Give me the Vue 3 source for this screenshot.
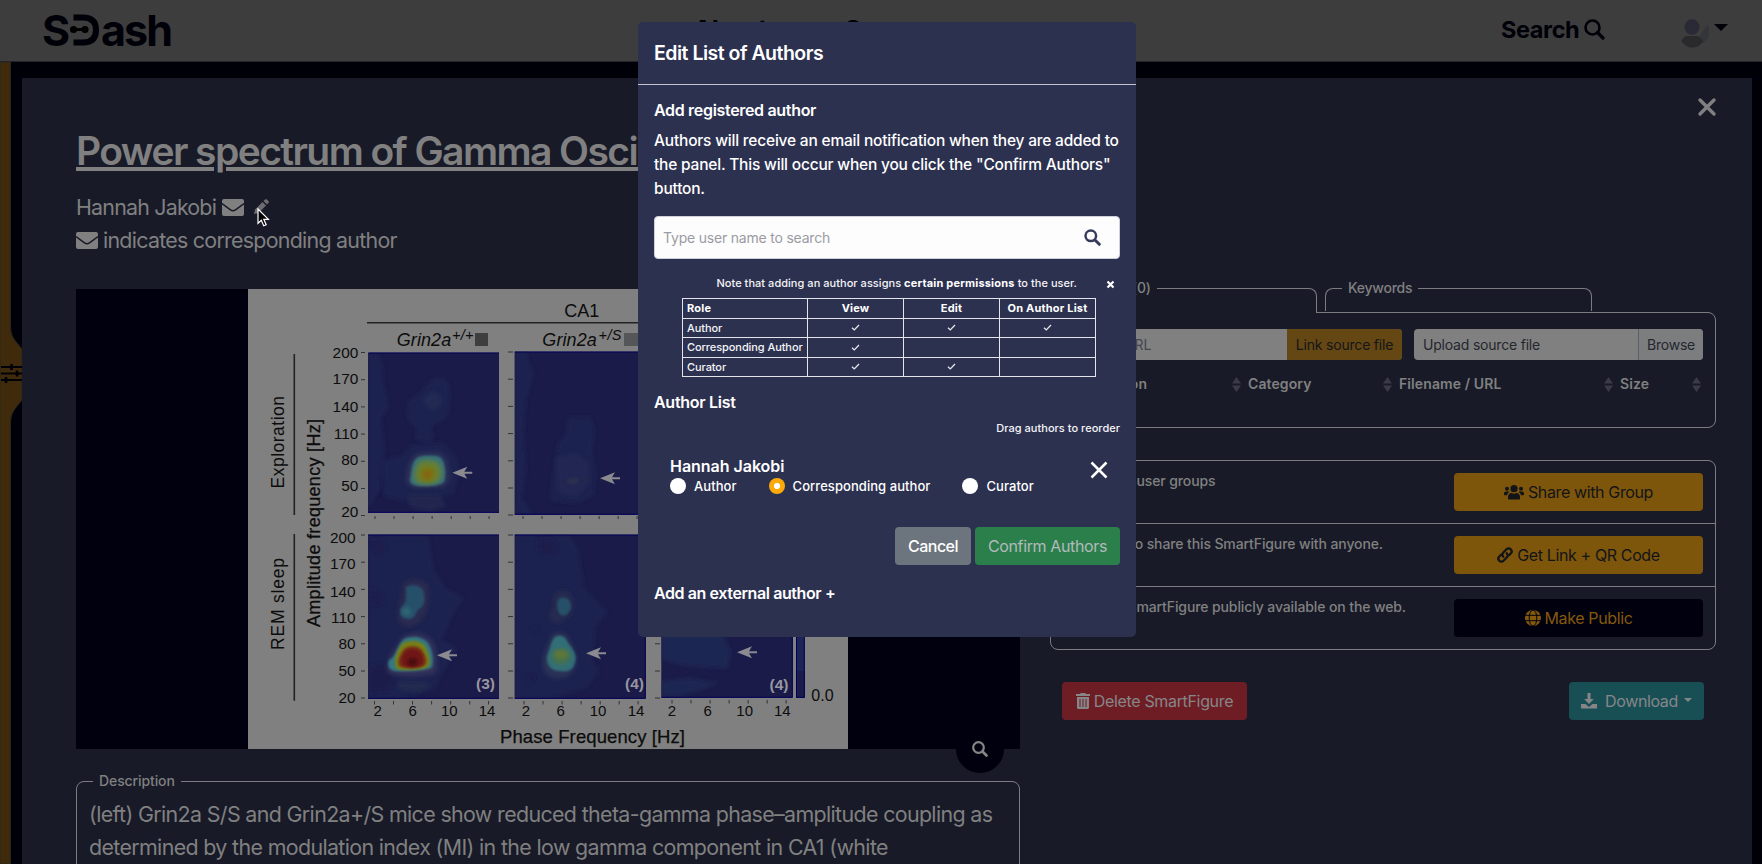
<script setup>
const columns = ['Description', 'Category', 'Filename / URL', 'Size']

const shareRows = [
  { text: 'Share with user groups', label: 'Share with Group', icon: 'users', kind: 'amber', fit: 'fit-a' },
  { text: 'Get a link to share this SmartFigure with anyone.', label: 'Get Link + QR Code', icon: 'link', kind: 'amber', fit: 'fit-b' },
  { text: 'Make the SmartFigure publicly available on the web.', label: 'Make Public', icon: 'globe', kind: 'dark', fit: 'fit-c' },
]

const permissions = [
  { role: 'Author', marks: [true, true, true] },
  { role: 'Corresponding Author', marks: [true, false, false] },
  { role: 'Curator', marks: [true, true, false] },
]

const roles = [
  { label: 'Author', on: false },
  { label: 'Corresponding author', on: true },
  { label: 'Curator', on: false },
]

const amplitudes = [200, 170, 140, 110, 80, 50, 20]
const topBase = [69.2, 95.2, 123.2, 149.8, 175.8, 202.2, 228.2]
const lowBase = [253.5, 279.5, 307.5, 333.5, 359.8, 387.2, 413.5]
const tickStep = [0, 27.2, 54.4, 81.6, 108.8, 136, 163]
const phases = [
  [129.7, 164.7, 201.3, 239],
  [278, 312.7, 350, 388],
  [424, 459.7, 496.7, 534.3],
]
const phaseNames = [2, 6, 10, 14]
const arrows = [[204.3, 183.7], [352, 189.3], [189, 366.3], [338, 364.3], [489, 363.3]]
</script>

<template>
  <div class="app">
    <header class="topbar">
      <div class="logo">
        <span class="logo-s">S</span>
        <svg class="logo-d" width="30" height="32" viewBox="0 0 30 32">
          <path d="M3.5 3.5H13C22 3.5 26 8 26 16S22 28.500 13 28.500H3.500" fill="none" stroke="#000008" stroke-width="6" />
          <circle cx="3.500" cy="15.500" r="3.600" /><circle cx="15" cy="15.500" r="3.600" /><path d="M3 14h12v3H3z" />
        </svg>
        <span class="logo-ash">ash</span>
      </div>
      <nav class="nav"><span>About</span><span>Groups</span></nav>
      <div class="search">
        Search
        <svg width="21" height="21" viewBox="0 0 21 21"><circle cx="8.500" cy="8.500" r="7" fill="none" stroke="currentColor" stroke-width="2.600" /><path d="M13.500 13.500l5.500 5.500" stroke="currentColor" stroke-width="3.200" stroke-linecap="round" /></svg>
      </div>
      <div class="avatar">
        <svg width="28" height="29" viewBox="0 0 28 29"><path d="M26.500 5.500a14 14 0 0 1-4.500 19l-3-8z" fill="#34343b" /><ellipse cx="11" cy="8" rx="7.500" ry="7.800" fill="#2a2a36" /><path d="M.5 22c1.500-4 4-5 6-5h9c3 0 5 2 6.500 5.500-3 4.500-7 6-11 6S3 26 .5 22z" fill="#2a2a2c" /></svg>
        <i class="caret"></i>
      </div>
    </header>

    <main class="stage">
      <svg class="rail" width="22" height="802" viewBox="0 0 22 802">
        <path d="M0 0H10.500V263C10.500 276 15 278 22 287V338C15 347 10.500 350 10.500 362V802H0z" fill="#3f2a0b" stroke="#26261f" />
        <path d="M1 305h21M1 311.500h21M1 318h21" stroke="#000008" stroke-width="2" />
        <path d="M11.500 302v6M17 308.500v6M6 315v6" stroke="#000008" stroke-width="2.600" />
      </svg>

      <section class="panel">
        <svg class="close" width="20" height="20" viewBox="0 0 20 20"><path d="M3 3l14 14M17 3L3 17" stroke="#808080" stroke-width="3.400" stroke-linecap="round" /></svg>

        <div class="left">
          <h1>Power spectrum of Gamma Oscillations</h1>
          <div class="byline">
            <span>Hannah Jakobi</span>
            <svg class="mail" width="22" height="17" viewBox="0 0 22 17"><rect width="22" height="17" rx="2" fill="#808080" /><path d="M0 4.500l8.500 6.300c1.600 1.200 3.400 1.200 5 0L22 4.500" fill="none" stroke="#181a28" stroke-width="1.500" /></svg>
            <svg class="pencil" width="15" height="15" viewBox="0 0 15 15"><path d="M0 15l1-4.500 7.500-7.500 3.500 3.500L4.500 14zM9.500 2L11 .6c.6-.6 1.300-.6 1.900 0l1.500 1.500c.6.6.6 1.300 0 1.900L13 5.500z" fill="#6d6d70" /></svg>
          </div>
          <div class="byline second">
            <svg class="mail" width="22" height="17" viewBox="0 0 22 17"><rect width="22" height="17" rx="2" fill="#808080" /><path d="M0 4.500l8.500 6.300c1.600 1.200 3.400 1.200 5 0L22 4.500" fill="none" stroke="#181a28" stroke-width="1.500" /></svg>
            <span class="indicates">indicates corresponding author</span>
          </div>

          <div class="figure">
            <svg width="600" height="460" viewBox="0 0 600 460" class="plot">
              <defs>
                <filter id="soft" x="-30%" y="-30%" width="160%" height="160%"><feGaussianBlur stdDeviation="2" /></filter>
                <filter id="edge" x="-30%" y="-30%" width="160%" height="160%"><feGaussianBlur stdDeviation=".9" /></filter>
                <clipPath id="a"><rect x="120" y="63.700" width="131" height="160" /></clipPath>
                <clipPath id="b"><rect x="266.700" y="62.700" width="131" height="163" /></clipPath>
                <clipPath id="c"><rect x="120" y="245.700" width="131" height="164" /></clipPath>
                <clipPath id="d"><rect x="266.700" y="245.700" width="131" height="164" /></clipPath>
                <clipPath id="e"><rect x="413.300" y="245.700" width="131.400" height="163" /></clipPath>
              </defs>
              <rect width="600" height="460" fill="#808080" />
              <path d="M119 33.700H400" stroke="#222" stroke-width="1.600" />
              <path d="M46.300 65V226M46.300 245V411.700" stroke="#222" stroke-width="1.600" />

              <g clip-path="url(#a)">
                <rect x="120" y="63" width="132" height="162" fill="#1b1b49" />
                <path d="M120 64h10l4 10 2 20 5 24-8 12 4 30-4 40-13 20z" fill="#1b2050" filter="url(#soft)" />
                <path d="M134 172l20-6 10-10 30-3 14 14 4 14-6 24-40 10-30-8z" fill="#1c2250" filter="url(#soft)" />
                <path d="M192 88c12 0 11 20 9 34-2 12-14 10-18 18l4 8-6 6-14-3 2-12c-12-3-12-24-6-30 10-2 16-20 29-21z" fill="#1c234f" filter="url(#soft)" />
                <ellipse cx="185" cy="112" rx="9" ry="9" fill="#212953" filter="url(#soft)" />
                <path d="M160 205h32l6 12-16 5-20-4z" fill="#20264f" filter="url(#soft)" />
                <path d="M168 164l24-1 7 7 3 20-6 8-30 1-8-6 2-17z" fill="#2f3158" filter="url(#soft)" />
                <path d="M171 168c8-2 18-2 22 1 5 5 5 20 3 24-4 4-14 4-24 4-11-1-11-5-9-11 1-9 2-16 8-18z" fill="#34707a" filter="url(#edge)" />
                <path d="M172 172c8-2 17-1 20 4 3 7 2 13-2 17-7 3-15 2-21 1-6-5-1-19 3-22z" fill="#657f37" filter="url(#soft)" />
                <ellipse cx="179.500" cy="185" rx="7.500" ry="7.500" fill="#7c730f" filter="url(#soft)" />
                <ellipse cx="179.500" cy="185.500" rx="3.500" ry="4" fill="#856517" filter="url(#edge)" />
              </g>
              <g clip-path="url(#b)">
                <rect x="266" y="62" width="132" height="165" fill="#1b1b49" />
                <path d="M266 62h12l8 24-8 24-2 30 2 40-4 30 12 16h-20z" fill="#1b2150" filter="url(#soft)" />
                <path d="M320 128h22l5 12-3 22 4 20-2 24-16 8-28-2 4-36 4-22 8-10z" fill="#1d244f" filter="url(#soft)" />
                <path d="M308 168l20-4 12 10 2 20-14 14-18-4z" fill="#202852" filter="url(#soft)" />
                <ellipse cx="325" cy="192" rx="7" ry="3.500" fill="#2b2e4f" filter="url(#edge)" />
              </g>
              <g clip-path="url(#c)">
                <rect x="120" y="245" width="132" height="165" fill="#1b1b49" />
                <path d="M120 245h60l6 36 12 18 18 10-12 18-10 24 16 8-14 22-10 20-40 9h-26z" fill="#1c2450" filter="url(#soft)" />
                <path d="M120 378l20-4 10 14-10 14-20 2zM122 252l12-2 4 10-8 6zM122 300l8 2 6 10-10 6z" fill="#1b1e4c" filter="url(#soft)" />
                <path d="M154 296c6-7 20-7 26 0 2 10 2 24-6 34-6 8-14 10-22 4-6-8 4-26 2-38z" fill="#292b50" filter="url(#soft)" />
                <path d="M158 298c6-3 14-2 17 3 2 7 2 14-2 18-5 2-5 8-8 10-5 3-13 0-13-6 0-5 6-8 6-13z" fill="#26506a" filter="url(#edge)" />
                <ellipse cx="158.500" cy="322.500" rx="4" ry="4" fill="#326a74" filter="url(#soft)" />
                <path d="M154 348c9-6 24-5 30 4 6 10 6 22 4 32-14 5-36 5-48 0-4-14 8-24 14-36z" fill="#30335a" filter="url(#soft)" />
                <path d="M156 350c7-3 18-3 24 4 5 8 6 18 4 24-2 4-32 5-37 4-6-1-8-5-6-11 7-2 8-15 15-21z" fill="#347783" filter="url(#edge)" />
                <path d="M155 354c6-3 18-3 22 3 4 7 6 15 4 20-3 4-26 5-32 3-5-6 0-20 6-26z" fill="#768013" filter="url(#edge)" />
                <path d="M157 359c6-3 13-3 17 2 4 6 6 12 3 15-4 4-22 4-26 1-3-5 2-14 6-18z" fill="#7c3513" filter="url(#edge)" />
                <path d="M159 361c6-2 11-1 14 3 3 6 3 11 0 13-5 2-16 2-19-1-2-5 1-12 5-15z" fill="#701417" filter="url(#edge)" />
                <ellipse cx="164.500" cy="373" rx="5" ry="4" fill="#4c0a0e" filter="url(#edge)" />
                <path d="M148 392h28l8 5-14 6-20-3z" fill="#242b50" filter="url(#soft)" />
              </g>
              <g clip-path="url(#d)">
                <rect x="266" y="245" width="132" height="165" fill="#1b1b49" />
                <path d="M266 245h54l10 14 6 40 12 12 12 12-12 14-4 34 8 10-14 18-40 11h-32z" fill="#1c2450" filter="url(#soft)" />
                <path d="M290 250h14l6 10-10 8-10-6zM284 336l8 4-6 6zM278 384l10 4-6 8z" fill="#1b1e4c" filter="url(#soft)" />
                <path d="M312 302c9-3 14 6 13 16-2 10-10 17-20 15-6-3-1-12 0-18 0-6 2-11 7-13z" fill="#272c50" filter="url(#soft)" />
                <path d="M312 309c6-2 11 2 11 9-1 6-6 10-10 8-5-3-5-15-1-17z" fill="#265068" filter="url(#edge)" />
                <path d="M304 346c8-5 16-2 19 8 6 10 8 22 0 31-8 6-20 6-26-1-6-14 2-26 7-38z" fill="#2a3156" filter="url(#soft)" />
                <path d="M307 348c5-3 11-1 13 6 6 7 10 14 6 22-2 6-8 7-14 6-9 0-14-6-13-15 3-6 4-16 8-19z" fill="#326e77" filter="url(#edge)" />
                <ellipse cx="313" cy="367.500" rx="9" ry="8" fill="#46714c" filter="url(#soft)" />
                <ellipse cx="313" cy="365.500" rx="7" ry="4" fill="#607838" filter="url(#soft)" />
              </g>
              <g clip-path="url(#e)">
                <rect x="413" y="245" width="132" height="165" fill="#1b1b49" />
                <path d="M413 345h62l8 18-3 16-26-1-20-2-21-6zM413 392l30-3 28 5-20 8-22 5h-16z" fill="#1c2652" filter="url(#soft)" />
              </g>
              <rect x="548" y="245" width="8.700" height="164" fill="#1c2553" />
              <path d="M548 382h8.700v26.500H548z" fill="#1b1c4b" />
              <g fill="none" stroke="#00005a" stroke-width="1">
                <path d="M120.500 64H251M120 223.300H251M266.700 63H398M266.700 225.300H398M120 246H251M120 409.300H251M266.700 246H398M397.300 246V409.300H266.700M544.300 246V408.300H413.300M548.500 246V408.300H556.300V246" />
              </g>

              <g stroke="#333" stroke-width="1">
                <template v-for="s in tickStep" :key="s">
                  <path :d="`M113 ${63.5 + s}h4M260 ${63 + s}h5M113 ${246 + s}h4M260 ${246 + s}h5M407 ${246 + s}h5`" />
                  <path :d="`M${127 + s * 0.7} 227v3M${275 + s * 0.7} 227v3M${126.500 + s * 0.7} 412v3.500M${276 + s * 0.7} 412v3.500M${424 + s * 0.7} 411v3.500`" />
                </template>
              </g>

              <g font-size="15.400" text-anchor="end">
                <text v-for="(n, i) in amplitudes" :key="'t' + n" x="110.300" :y="topBase[i]">{{ n }}</text>
                <text v-for="(n, i) in amplitudes" :key="'l' + n" x="107.600" :y="lowBase[i]">{{ n }}</text>
              </g>
              <g font-size="15" text-anchor="middle">
                <template v-for="(set, k) in phases" :key="k">
                  <text v-for="(x, i) in set" :key="x" :x="x" y="427">{{ phaseNames[i] }}</text>
                </template>
              </g>
              <text x="563.300" y="412" font-size="16">0.0</text>
              <text x="316.300" y="27.700" font-size="18" textLength="35">CA1</text>
              <g font-style="italic">
                <text x="148.700" y="57" font-size="18" textLength="54.500">Grin2a</text>
                <text x="204" y="51" font-size="14.500" textLength="21.500">+/+</text>
                <text x="294.300" y="57" font-size="18" textLength="54.500">Grin2a</text>
                <text x="350.500" y="51" font-size="14.500" textLength="23">+/S</text>
              </g>
              <rect x="227" y="44" width="13" height="13" fill="#3e3e3e" />
              <rect x="376" y="44" width="16" height="13" fill="#555657" />
              <text transform="translate(36.300 199.500) rotate(-90)" font-size="17.500" textLength="92.500">Exploration</text>
              <text transform="translate(36.300 361) rotate(-90)" font-size="17.500" textLength="92">REM sleep</text>
              <text transform="translate(71.500 338) rotate(-90)" font-size="18" textLength="208" class="axis">Amplitude frequency [Hz]</text>
              <text x="252" y="453.500" font-size="18.500" textLength="185" class="axis">Phase Frequency [Hz]</text>
              <g font-size="15.500" font-weight="700" class="count">
                <text x="228" y="400">(3)</text><text x="377" y="400">(4)</text><text x="521.500" y="401">(4)</text>
              </g>
              <path v-for="a in arrows" :key="a[0]" :d="`M${a[0]} ${a[1]}l15 -6 -3 5h8v2h-8l3 5z`" fill="#8a8a90" />
            </svg>
            <div class="lens">
              <svg width="16" height="16" viewBox="0 0 16 16"><circle cx="6.500" cy="6.500" r="5.300" fill="none" stroke="#868686" stroke-width="2.200" /><path d="M10.500 10.500l4 4" stroke="#868686" stroke-width="2.700" stroke-linecap="round" /></svg>
            </div>
          </div>

          <fieldset class="description">
            <legend>Description</legend>
            <p>(left) Grin2a S/S and Grin2a+/S mice show reduced theta-gamma phase–amplitude coupling as determined by the modulation index (MI) in the low gamma component in CA1 (white</p>
          </fieldset>
        </div>

        <aside class="right">
          <div class="tabs">
            <fieldset class="tab active"><legend>Sources (0)</legend></fieldset>
            <fieldset class="tab"><legend>Keywords</legend></fieldset>
          </div>
          <div class="sources">
            <div class="inputs">
              <div class="field"><span class="box url">Source URL</span><span class="linkbtn">Link source file</span></div>
              <div class="field upload"><span class="box">Upload source file</span><span class="browse">Browse</span></div>
            </div>
            <div class="cols">
              <div v-for="c in columns" :key="c" class="col">
                <span>{{ c }}</span>
                <svg width="9" height="15" viewBox="0 0 9 15"><path d="M0 6.500L4.500 0 9 6.500zM0 8.500h9L4.500 15z" fill="#3a3b44" /></svg>
              </div>
            </div>
          </div>

          <div class="sharing">
            <div v-for="r in shareRows" :key="r.label" class="share-row">
              <span :class="r.fit">{{ r.text }}</span>
              <button :class="['btn', r.kind]">
                <svg v-if="r.icon === 'users'" width="20" height="15" viewBox="0 0 20 15"><g fill="currentColor"><circle cx="10" cy="3.700" r="3.600" /><circle cx="3" cy="3.800" r="2" /><circle cx="17" cy="3.800" r="2" /><path d="M4 13.500v-1.400c0-2.500 1.700-4 3.700-4 1.300.8 3.300.8 4.600 0 2 0 3.700 1.500 3.700 4v1.400c0 .7-.5 1.100-1.200 1.100H5.200C4.500 14.600 4 14.200 4 13.500zM0 9.500V8.600c0-1.200.8-2 2-2h2c.6 0 1 .1 1.400.5C4 8 3.300 9 3 10.200H.8c-.5 0-.8-.3-.8-.7zM20 9.500V8.600c0-1.200-.8-2-2-2h-2c-.6 0-1 .1-1.400.5C16 8 16.700 9 17 10.200h2.200c.5 0 .8-.3.8-.7z" /></g></svg>
                <svg v-else-if="r.icon === 'link'" width="16" height="16" viewBox="0 0 16 16"><g fill="none" stroke="currentColor" stroke-width="2.300" stroke-linecap="round"><path d="M6.300 9.700c-1.200-1.200-1.200-3 0-4.200l3.200-3.200c1.200-1.200 3-1.200 4.200 0s1.200 3 0 4.200L12 8.200" /><path d="M9.700 6.300c1.200 1.200 1.200 3 0 4.200l-3.200 3.200c-1.200 1.200-3 1.200-4.200 0s-1.200-3 0-4.200L4 7.800" /></g></svg>
                <svg v-else width="16" height="16" viewBox="0 0 16 16"><circle cx="8" cy="8" r="8" fill="currentColor" /><g fill="none" stroke="#00000f" stroke-width="1"><ellipse cx="8" cy="8" rx="3.800" ry="8" /><path d="M0 5.300h16M0 10.700h16" /></g></svg>
                {{ r.label }}
              </button>
            </div>
          </div>

          <div class="actions">
            <button class="btn danger">
              <svg width="14" height="16" viewBox="0 0 14 16"><path d="M0 1h4l.8-1h4.400l.8 1h4v2H0zM1 4h12v10.500c0 .9-.6 1.500-1.500 1.500h-9C1.600 16 1 15.400 1 14.500z" fill="currentColor" /><path d="M4 6v8M7 6v8M10 6v8" stroke="#6f1d25" stroke-width="1" /></svg>
              Delete SmartFigure
            </button>
            <button class="btn info">
              <svg width="16" height="16" viewBox="0 0 16 16"><path d="M6.500 0h3v6h3.300L8 11 3.200 6h3.300zM0 11h4.500L8 14l3.500-3H16v4.500H0z" fill="currentColor" /></svg>
              <span>Download</span><i class="caret"></i>
            </button>
          </div>
        </aside>
      </section>
    </main>

    <svg class="cursor" width="13" height="19" viewBox="0 0 13 19"><path d="M1 1v14.300l3.300-3.100 2.400 5.600 2.500-1.100-2.400-5.400h4.600z" fill="#000" stroke="#fff" stroke-width="1.200" /></svg>

    <div class="modal">
      <div class="modal-head">Edit List of Authors</div>
      <div class="modal-body">
        <h2>Add registered author</h2>
        <p class="intro">Authors will receive an email notification when they are added to<br>the panel. This will occur when you click the "Confirm Authors"<br>button.</p>
        <div class="user-search">
          <span>Type user name to search</span>
          <svg width="17" height="17" viewBox="0 0 17 17"><circle cx="6.800" cy="6.800" r="5.300" fill="none" stroke="#383c5c" stroke-width="2.500" /><path d="M11 11l4.300 4.300" stroke="#383c5c" stroke-width="3" stroke-linecap="round" /></svg>
        </div>
        <div class="note">
          <span>Note that adding an author assigns <b>certain permissions</b> to the user.</span>
          <svg width="9" height="9" viewBox="0 0 9 9"><path d="M1.500 1.500l6 6M7.500 1.500l-6 6" stroke="#fff" stroke-width="2.200" /></svg>
        </div>
        <table>
          <thead><tr><th>Role</th><th>View</th><th>Edit</th><th>On Author List</th></tr></thead>
          <tbody>
            <tr v-for="p in permissions" :key="p.role">
              <td>{{ p.role }}</td>
              <td v-for="(m, i) in p.marks" :key="i">
                <svg v-if="m" width="9" height="7" viewBox="0 0 9 7"><path d="M1 3.700l2.300 2.200L8 1" fill="none" stroke="#e8e8ee" stroke-width="1.300" /></svg>
              </td>
            </tr>
          </tbody>
        </table>
        <h2 class="list-title">Author List</h2>
        <div class="hint">Drag authors to reorder</div>
        <div class="person">
          <div class="name">Hannah Jakobi</div>
          <div class="roles">
            <label v-for="r in roles" :key="r.label"><i :class="{ on: r.on }"></i>{{ r.label }}</label>
          </div>
          <svg class="remove" width="18" height="18" viewBox="0 0 18 18"><path d="M1.500 1.500l15 15M16.500 1.500l-15 15" stroke="#fff" stroke-width="2.500" /></svg>
        </div>
        <div class="buttons">
          <button class="btn cancel">Cancel</button>
          <button class="btn confirm">Confirm Authors</button>
        </div>
        <h2 class="external">Add an external author +</h2>
      </div>
    </div>
  </div>
</template>

<style>
body { background: #000008; overflow: hidden; }
</style>

<style scoped>
* { box-sizing: border-box; }
.app { position: relative; width: 1762px; height: 864px; overflow: hidden; display: flex; flex-direction: column; font-family: Inter, "Liberation Sans", sans-serif; color: #808080; white-space: nowrap; }
svg { display: block; flex: none; }
h1, h2, p, fieldset { margin: 0; }
button { font-family: inherit; margin: 0; }

.topbar { position: relative; height: 62px; flex: none; background: #3d3d3d; border-bottom: 1px solid #24242a; display: flex; align-items: center; color: #000008; font-weight: 700; padding-left: 42px; }
.logo { display: flex; align-items: center; font-size: 43px; line-height: 60px; height: 60px; width: 140px; margin-top: -2px; }
.logo-s { width: 28px; }
.logo-d { margin: 0; }
.logo-ash { letter-spacing: -1.900px; margin-left: 1px; }
.nav { display: flex; margin-left: 511px; font-size: 26px; letter-spacing: -.7px; width: 808px; padding-bottom: 3px; }
.nav span { width: 150px; }
.search { display: flex; align-items: center; gap: 5px; font-size: 23.500px; letter-spacing: -.4px; padding-bottom: 2px; }
.avatar { display: flex; margin-left: 76px; gap: 5px; padding-top: 6px; }
.caret { display: block; width: 0; height: 0; border: 7px solid transparent; border-top-color: currentColor; border-bottom: 0; margin-top: 5px; }

.stage { display: flex; flex: none; height: 802px; }
.panel { position: relative; width: 1730px; margin-top: 16px; padding-left: 54px; background: #181a28; display: flex; }
.close { position: absolute; left: 1675px; top: 19px; }

.left { width: 944px; padding-top: 49px; }
h1 { font-size: 39px; font-weight: 600; line-height: 48px; letter-spacing: -1.580px; text-decoration: underline; text-decoration-thickness: 4px; text-underline-offset: 2px; }
.byline { display: flex; align-items: center; margin-top: 16px; height: 33px; font-size: 21.400px; line-height: 33px; letter-spacing: -.8px; }
.byline.second { margin-top: 0; }
.byline .mail { margin: 0 6px 1px 6px; }
.byline.second .mail { margin-left: 0; margin-right: 5px; }
.indicates { letter-spacing: -.73px; }
.pencil { margin: -3px 0 0 4px; }
.figure { position: relative; margin-top: 32px; height: 460px; background: #00000f; padding-left: 172px; }
.plot text { font-family: "Liberation Sans", Arial, sans-serif; fill: #0c0c0c; }
.plot .axis { stroke: #0c0c0c; stroke-width: .25px; }
.plot .count text { fill: #96969f; }
.lens { position: absolute; left: 880px; top: 436px; width: 48px; height: 48px; border-radius: 50%; background: #00000f; display: flex; align-items: center; justify-content: center; }
.description { margin-top: 22px; border: 1px solid #7c7c80; border-radius: 8px; padding: 7px 12px; min-width: 0; height: 200px; }
legend { font-size: 14px; font-weight: 500; line-height: 20px; padding: 0 6px; margin-left: 4px; letter-spacing: -.1px; }
.description p { white-space: normal; font-size: 21.400px; line-height: 33px; letter-spacing: -.640px; width: 912px; }

.right { margin-left: 30px; width: 666px; padding-top: 201px; font-size: 14px; }
.tabs { display: flex; gap: 8px; height: 33px; }
.tab { width: 267px; height: 33px; padding: 0; border: 1px solid #7c7c80; border-bottom: 0; border-radius: 8px 8px 0 0; min-width: 0; margin-top: -1px; }
.tab legend { margin-left: 16px; letter-spacing: -.25px; }
.tab.active legend { margin-left: 17px; letter-spacing: -.1px; }
.tab.active { position: relative; z-index: 1; height: 35px; background: linear-gradient(#181a28, #181a28) bottom / 100% 24px no-repeat; }
.sources { height: 116px; border: 1px solid #7c7c80; border-radius: 0 8px 8px 8px; padding: 16px 12px; }
.inputs { display: flex; gap: 12px; }
.field { display: flex; width: 339px; height: 31px; line-height: 31px; border-radius: 4px; overflow: hidden; color: #24272e; letter-spacing: -.2px; background: #808080; }
.field.upload { width: 289px; }
.box { flex: 1; padding-left: 9px; }
.box.url { padding-left: 12px; color: #45464e; }
.linkbtn { width: 115px; background: #644713; text-align: center; color: #15151a; }
.browse { width: 65px; text-align: center; border-left: 1px solid #5e5f63; background: #7c7d7f; }
.cols { display: grid; grid-template-columns: 181px 151px 221px 82.500px; margin: 14px 0 0 4px; }
.col { display: flex; justify-content: space-between; align-items: center; padding-right: 7px; font-weight: 600; line-height: 20px; letter-spacing: .1px; }
.col:first-child { letter-spacing: .2px; }
.col:last-child { padding-right: 2px; }

.sharing { margin-top: 32px; border: 1px solid #7c7c80; border-radius: 8px; height: 190px; }
.share-row { display: flex; justify-content: space-between; align-items: flex-start; height: 63px; padding: 12px 12px 0; font-weight: 500; line-height: 20px; border-top: 1px solid #7c7c80; }
.share-row:first-child { border-top: 0; height: 62px; }
.share-row > span { margin-top: -2px; text-align: right; letter-spacing: -.11px; }
.fit-a { width: 152.500px; }
.fit-b { width: 320px; }
.fit-c { width: 343px; }
.btn { display: flex; align-items: center; justify-content: center; gap: 4px; height: 38px; border: 0; border-radius: 4px; font-size: 16px; letter-spacing: -.370px; padding: 0; }
.amber { width: 249px; background: #7d560b; color: #131418; }
.dark { width: 249px; background: #00000f; color: #84590c; }
.actions { display: flex; justify-content: space-between; margin-top: 32px; padding: 0 12px; }
.danger { width: 185px; background: #6f1d25; color: #868689; letter-spacing: -.340px; }
.info { width: 135px; background: #184f55; color: #868689; }
.info span { margin-left: 4px; }
.info .caret { border-width: 4.500px; border-bottom: 0; margin: -3px 0 0 2px; }

.cursor { position: absolute; left: 257px; top: 208px; }

.modal { position: absolute; z-index: 5; left: 638px; top: 22px; width: 498px; height: 615px; background: #2d3150; border-radius: 5px; color: #fff; font-weight: 500; }
.modal-head { height: 63px; border-bottom: 1px solid #c4c5ce; padding: 16px 16px 0; font-size: 19.500px; font-weight: 600; line-height: 30px; letter-spacing: -.5px; }
.modal-body { padding: 13px 16px 0; }
h2 { font-size: 16px; font-weight: 600; line-height: 24px; letter-spacing: -.320px; }
.intro { margin-top: 7px; font-size: 15.500px; line-height: 24px; letter-spacing: -.2px; }
.user-search { display: flex; justify-content: space-between; align-items: center; height: 43px; margin-top: 15px; padding: 0 18px 0 8px; background: #fdfdfd; border-radius: 4px; border: 1px solid #ced0dc; color: #9b9ba4; font-size: 14px; font-weight: 400; letter-spacing: -.2px; }
.note { display: flex; justify-content: flex-end; align-items: center; height: 16px; margin-top: 16px; padding-right: 5px; gap: 29px; font-size: 11px; line-height: 16px; color: #f4f4f7; letter-spacing: .04px; }
.note svg { margin-top: 3px; }
.note b { font-weight: 700; letter-spacing: .2px; color: #fff; }
table { width: 414px; margin: 7px 0 0 28px; border-collapse: collapse; table-layout: fixed; font-size: 11px; color: #f4f4f7; letter-spacing: -.08px; }
th, td { border: 1px solid #e4e4ea; height: 19.500px; padding: 0; line-height: 16px; text-align: center; }
th:first-child, td:first-child { width: 125px; text-align: left; padding-left: 4px; }
th { font-weight: 700; letter-spacing: .2px; color: #fff; }
td svg { margin: 0 auto; }
.list-title { margin-top: 13px; letter-spacing: -.280px; }
.hint { margin-top: 6px; font-size: 11px; line-height: 16px; text-align: right; color: #f4f4f7; letter-spacing: .03px; }
.person { position: relative; margin-top: 20px; padding-left: 16px; }
.name { font-size: 16px; font-weight: 600; line-height: 20px; letter-spacing: -.03px; }
.roles { display: flex; gap: 32px; height: 20px; font-size: 13px; line-height: 20px; letter-spacing: .06px; }
.roles label { display: flex; align-items: center; }
.roles i { width: 16px; height: 16px; border-radius: 50%; background: #fff; margin-right: 8px; }
.roles i.on { background: radial-gradient(circle, #fff 0 2.800px, #fbaa0a 3.400px); }
.remove { position: absolute; left: 436px; top: 5px; }
.buttons { display: flex; justify-content: flex-end; gap: 4px; margin-top: 31px; }
.cancel { width: 76px; background: #6c747d; color: #fff; font-weight: 500; letter-spacing: -.5px; }
.confirm { width: 145px; background: #2b7f4a; color: #b2babd; }
.external { margin-top: 16px; letter-spacing: -.400px; }
</style>
